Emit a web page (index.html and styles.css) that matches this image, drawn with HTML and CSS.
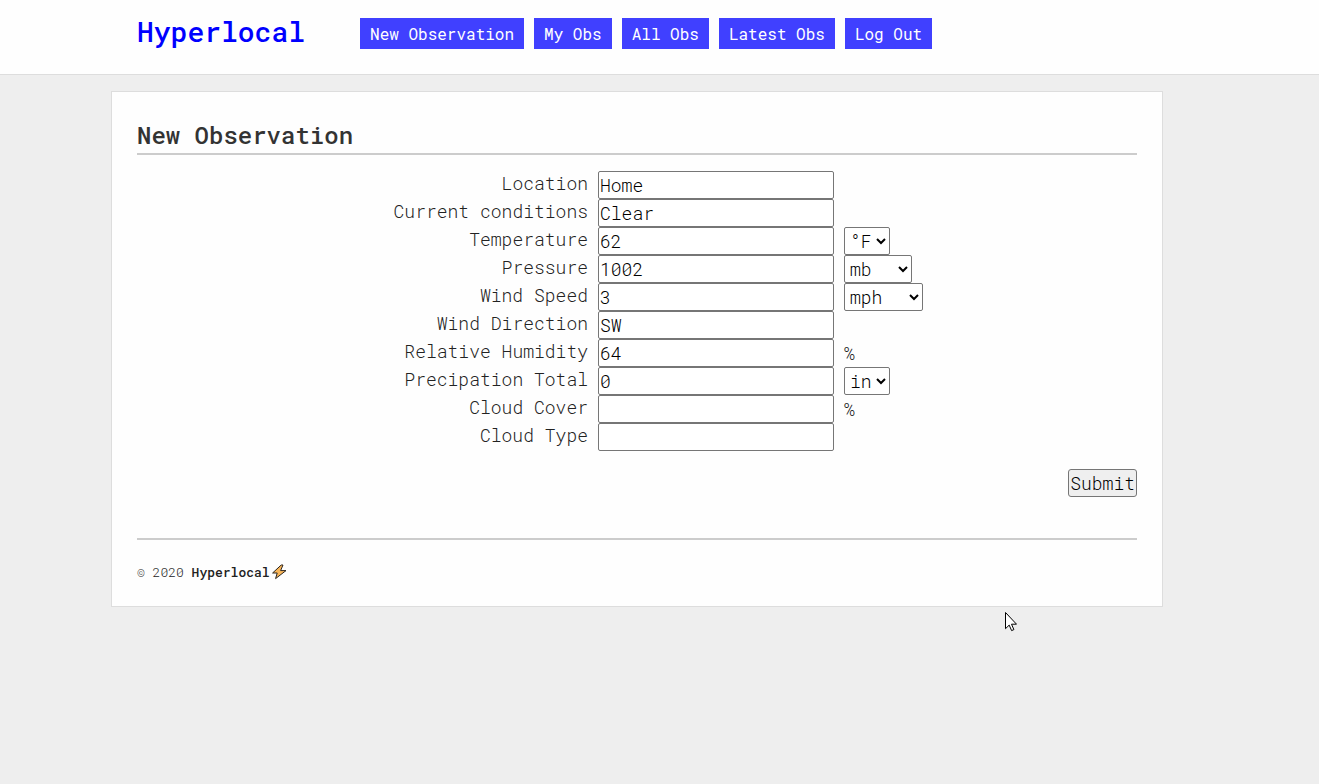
FILE: index.html
```html
<!DOCTYPE html>
<html lang="en">
<head>
<meta charset="utf-8">
<meta name="viewport" content="width=device-width, initial-scale=1">
<title>New Observation</title>
<link rel="stylesheet" href="styles.css">
</head>
<body>
<header class="site-header">
  <div class="header-inner">
    <a class="brand" href="#">Hyperlocal</a>
    <nav class="nav">
      <a class="nav-link" href="#">New Observation</a>
      <a class="nav-link" href="#">My Obs</a>
      <a class="nav-link" href="#">All Obs</a>
      <a class="nav-link" href="#">Latest Obs</a>
      <a class="nav-link" href="#">Log Out</a>
    </nav>
  </div>
</header>
<div class="page">
  <main class="card">
    <h1 class="title">New Observation</h1>
    <form class="form">
      <div class="row"><label for="location">Location</label><input id="location" type="text" value="Home"></div>
      <div class="row"><label for="cond">Current conditions</label><input id="cond" type="text" value="Clear"></div>
      <div class="row"><label for="temp">Temperature</label><input id="temp" type="text" value="62"><select aria-label="Temperature unit"><option>°F</option><option>°C</option></select></div>
      <div class="row"><label for="pres">Pressure</label><input id="pres" type="text" value="1002"><select aria-label="Pressure unit"><option>mb</option><option>inHg</option></select></div>
      <div class="row"><label for="wind">Wind Speed</label><input id="wind" type="text" value="3"><select aria-label="Wind speed unit"><option>mph</option><option>knots</option></select></div>
      <div class="row"><label for="dir">Wind Direction</label><input id="dir" type="text" value="SW"></div>
      <div class="row"><label for="hum">Relative Humidity</label><input id="hum" type="text" value="64"><span class="unit">%</span></div>
      <div class="row"><label for="precip">Precipation Total</label><input id="precip" type="text" value="0"><select aria-label="Precipitation unit"><option>in</option><option>mm</option></select></div>
      <div class="row"><label for="cover">Cloud Cover</label><input id="cover" type="text"><span class="unit">%</span></div>
      <div class="row"><label for="type">Cloud Type</label><input id="type" type="text"></div>
      <div class="actions"><button class="submit" type="submit">Submit</button></div>
    </form>
    <footer class="footer">
      <span>© 2020 <strong class="footer-name">Hyperlocal</strong></span>
      <svg class="bolt" viewBox="0 0 16 16" width="16" height="16" aria-hidden="true"><path d="M10.2 1 1.6 9h4.6L4.6 14.6 15 6.6H9.6L12 1z" fill="#f9b658" stroke="#2b2520" stroke-linejoin="round"/></svg>
    </footer>
  </main>
</div>
<svg class="pointer" viewBox="0 0 12 20" width="12" height="20" aria-hidden="true"><path d="M.5.5v16.2l3.7-3.6 2.4 5.5 2.3-1-2.4-5.4h5z" fill="#fff" stroke="#000"/></svg>
</body>
</html>
```

FILE: styles.css
```css
* { box-sizing: border-box; }

body {
  position: relative;
  margin: 0;
  min-height: 100vh;
  background: #eee;
  color: #222;
  font: 300 18px/28px "Roboto Mono", "DejaVu Sans Mono", monospace;
}

.site-header {
  padding: 15px 45px 25px 0;
  background: #fefefe;
  border-bottom: 1px solid #ddd;
}

.header-inner {
  display: flex;
  align-items: center;
  gap: 55px;
  max-width: 1000px;
  margin: 0 auto;
}

.brand {
  color: #00f;
  font-size: 28px;
  font-weight: 500;
  line-height: 34px;
  text-decoration: none;
}

.nav {
  display: flex;
  flex-wrap: wrap;
  gap: 10px;
  padding-top: 3px;
}

.nav-link {
  padding: 5px 10px;
  background: #4040ff;
  color: #fff;
  font-size: 16px;
  font-weight: 400;
  line-height: 21px;
  text-decoration: none;
}

.page { padding: 16px 45px 16px 0; }

.card {
  max-width: 1052px;
  margin: 0 auto;
  padding: 25px;
  background: #fefefe;
  border: 1px solid #ddd;
}

.title {
  margin: 0 0 16px;
  padding: 2px 0;
  border-bottom: 2px solid #ccc;
  color: #333;
  font-size: 24px;
  font-weight: 500;
  line-height: 32px;
}

.row {
  display: grid;
  grid-template-columns: 451px 236px auto;
  column-gap: 10px;
  justify-content: start;
}

.row label {
  line-height: 24px;
  text-align: right;
}

.row input,
.row select,
.submit {
  height: 28px;
  border: 1px solid #767676;
  border-radius: 2px;
  color: #000;
  font: inherit;
}

.row input {
  width: 100%;
  padding: 0 1px;
  background: #fff;
}

.row select {
  padding: 0 1px;
  background: #fff;
}

.actions {
  display: flex;
  justify-content: flex-end;
  padding: 18px 0 41px;
}

.submit {
  padding: 0 1px;
  background: #efefef;
  border-radius: 3px;
  line-height: 26px;
}

.footer {
  display: flex;
  align-items: center;
  gap: 1px;
  padding-top: 23px;
  border-top: 2px solid #ccc;
  font-size: 13px;
  line-height: 18px;
}

.footer-name { font-weight: 500; }

.pointer {
  position: absolute;
  top: 612px;
  left: 1005px;
}
```
